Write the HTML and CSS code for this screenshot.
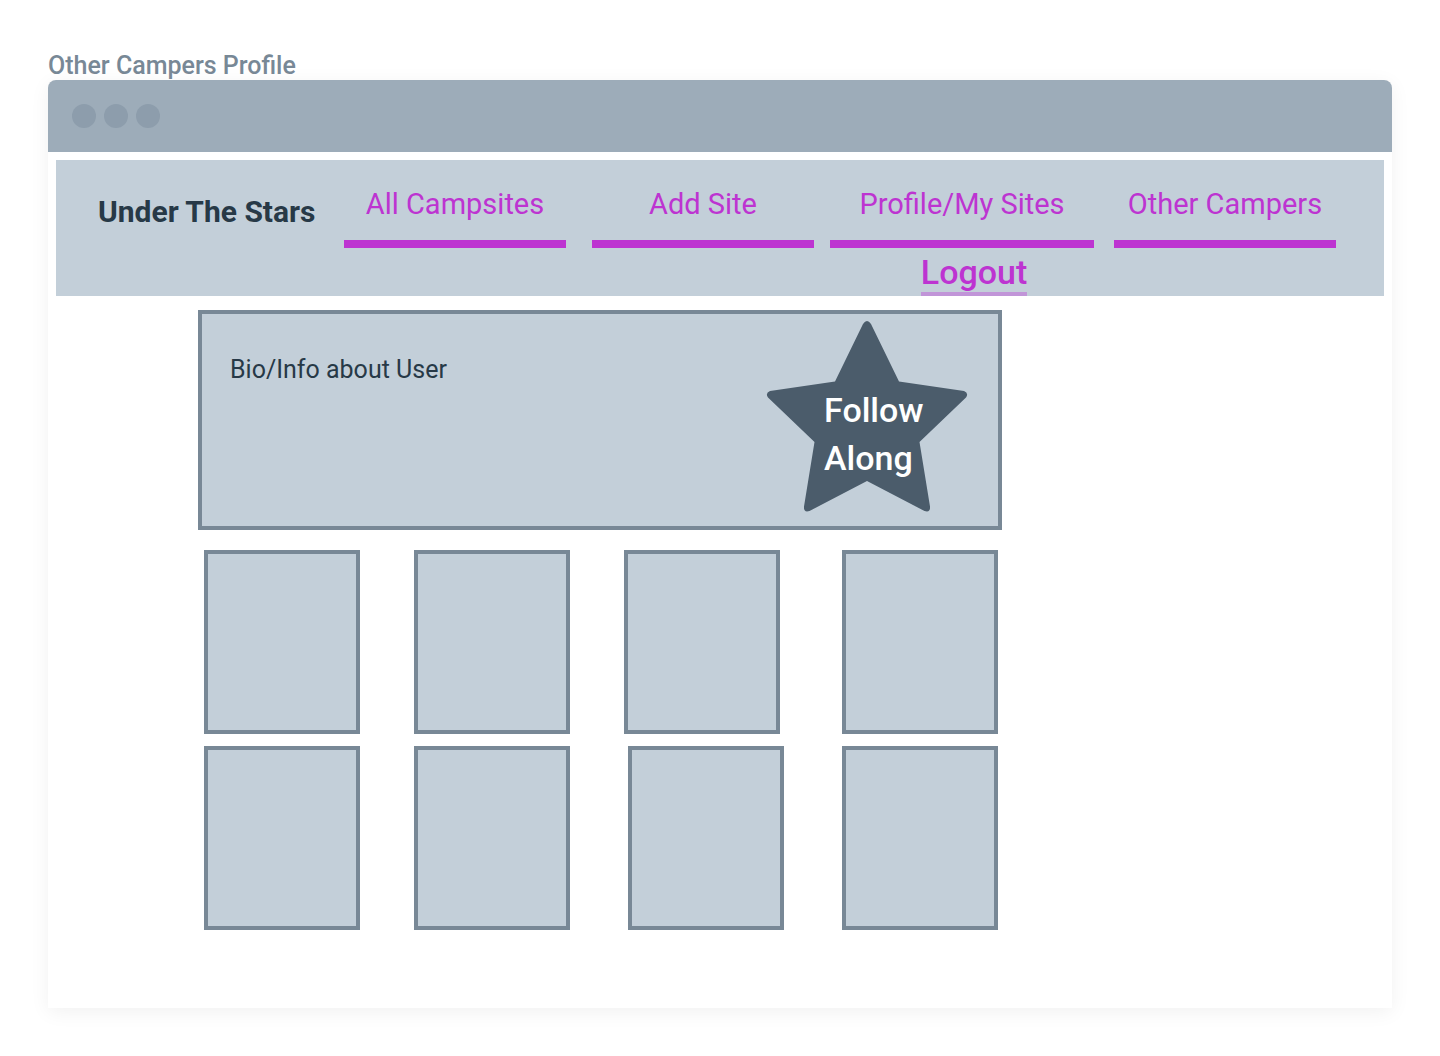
FILE: index.html
```html
<!DOCTYPE html>
<html lang="en">
<head>
<meta charset="utf-8">
<meta name="viewport" content="width=device-width, initial-scale=1">
<title>Other Campers Profile</title>
<link rel="stylesheet" href="styles.css">
</head>
<body>
<h1 class="page-title">Other Campers Profile</h1>
<div class="window">
  <div class="window-bar">
    <span class="dot"></span>
    <span class="dot"></span>
    <span class="dot"></span>
  </div>
  <header class="site-header">
    <div class="brand">Under The Stars</div>
    <nav class="site-nav">
      <a class="nav-link campsites" href="#">All Campsites</a>
      <a class="nav-link add" href="#">Add Site</a>
      <a class="nav-link profile" href="#">Profile/My Sites</a>
      <a class="nav-link campers" href="#">Other Campers</a>
      <a class="logout" href="#">Logout</a>
    </nav>
  </header>
  <main class="content">
    <section class="bio">
      <p class="bio-text">Bio/Info about User</p>
      <button class="follow" type="button">
        <svg class="star" viewBox="0 0 206 196" aria-hidden="true">
          <path d="M71 63.500L99 6Q103 0 107 6L135 63.500L200 73Q205 75 202 79.500L155.500 124L166 188.500Q166.500 195 160.500 193L103 163L45.500 193Q39.500 195 40 188.500L50.500 124L4 79.500Q1 75 6 73Z"/>
        </svg>
        <span class="follow-label">Follow<br>Along</span>
      </button>
    </section>
    <section class="gallery" aria-label="Campsites">
      <div class="row first-row">
        <div class="card"></div>
        <div class="card"></div>
        <div class="card"></div>
        <div class="card"></div>
      </div>
      <div class="row second-row">
        <div class="card"></div>
        <div class="card"></div>
        <div class="card"></div>
        <div class="card"></div>
      </div>
    </section>
  </main>
</div>
</body>
</html>
```
FILE: styles.css
```css
:root {
  --bar: #9dacb9;
  --dot: #8d9dac;
  --panel: #c3cfd9;
  --line: #788896;
  --star: #4b5c6b;
  --ink: #273947;
  --accent: #bd34d1;
}

* {
  box-sizing: border-box;
}

body {
  margin: 0;
  padding: 52px 48px 48px;
  background: #fff;
  color: var(--ink);
  font-family: Roboto, "Liberation Sans", sans-serif;
}

.page-title {
  margin: 0;
  color: var(--line);
  font-size: 25px;
  font-weight: 500;
  line-height: 28px;
}

.window {
  border-radius: 8px 8px 0 0;
  background: #fff;
  box-shadow: 0 4px 20px rgba(0, 0, 0, 0.06);
}

.window-bar {
  display: flex;
  align-items: center;
  gap: 8px;
  height: 72px;
  padding: 0 24px;
  border-radius: 8px 8px 0 0;
  background: var(--bar);
}

.dot {
  width: 24px;
  height: 24px;
  border-radius: 50%;
  background: var(--dot);
}

.site-header {
  display: flex;
  margin: 8px 8px 0;
  padding: 0 48px 0 42px;
  background: var(--panel);
}

.brand {
  flex: 0 0 246px;
  padding-top: 32px;
  font-size: 30px;
  font-weight: 700;
  line-height: 40px;
  white-space: nowrap;
}

.site-nav {
  display: grid;
  flex: 1;
  grid-template-columns: 222fr 26fr 222fr 16fr 264fr 20fr 222fr;
  grid-template-rows: 88px 48px;
}

.nav-link {
  padding-top: 24px;
  border-bottom: 8px solid var(--accent);
  color: var(--accent);
  font-size: 29px;
  font-weight: 400;
  line-height: 40px;
  text-align: center;
  text-decoration: none;
  white-space: nowrap;
}

.campsites {
  grid-column: 1;
}

.add {
  grid-column: 3;
}

.profile {
  grid-column: 5;
}

.campers {
  grid-column: 7;
}

.logout {
  grid-column: 5;
  grid-row: 2;
  justify-self: center;
  margin-left: 24px;
  border-bottom: 4px solid #c195d8;
  color: var(--accent);
  font-size: 34px;
  font-weight: 500;
  line-height: 48px;
  text-decoration: none;
}

.content {
  max-width: 954px;
  padding: 14px 0 78px 150px;
}

.bio {
  display: flex;
  justify-content: space-between;
  align-items: flex-start;
  min-height: 220px;
  padding: 4px 28px;
  border: 4px solid var(--line);
  background: var(--panel);
}

.bio-text {
  margin: 36px 0 0;
  font-size: 25px;
  line-height: 32px;
}

.follow {
  display: grid;
  padding: 0;
  border: 0;
  background: none;
  color: #fff;
  font: inherit;
  font-size: 34px;
  font-weight: 500;
  line-height: 48px;
  text-align: left;
  cursor: pointer;
}

.star {
  grid-area: 1 / 1;
  width: 206px;
  height: 196px;
  fill: var(--star);
}

.follow-label {
  grid-area: 1 / 1;
  padding: 68px 0 0 60px;
}

.gallery {
  display: grid;
  gap: 12px;
  padding: 20px 4px 0 6px;
}

.row {
  display: grid;
}

.first-row {
  grid-template-columns: 156fr 54fr 156fr 54fr 156fr 62fr 156fr;
}

.second-row {
  grid-template-columns: 156fr 54fr 156fr 58fr 156fr 58fr 156fr;
}

.card {
  height: 184px;
  border: 4px solid var(--line);
  background: var(--panel);
}

.card:nth-child(2) {
  grid-column: 3;
}

.card:nth-child(3) {
  grid-column: 5;
}

.card:nth-child(4) {
  grid-column: 7;
}
```
